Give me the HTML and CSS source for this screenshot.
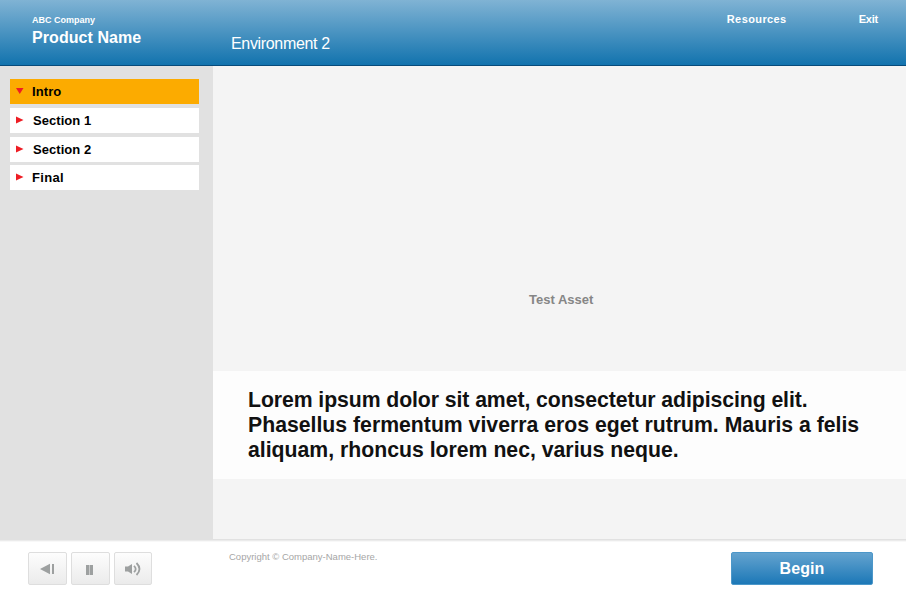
FILE: index.html
```html
<!DOCTYPE html>
<html lang="en">
<head>
<meta charset="utf-8">
<title>Product Name</title>
<link rel="stylesheet" href="styles.css">
</head>
<body>
<header class="header">
  <div class="brand">
    <div class="company"><span>ABC Company</span></div>
    <div class="product"><span>Product Name</span></div>
  </div>
  <h1 class="title"><span>Environment 2</span></h1>
  <nav class="links"><a class="resources">Resources</a><a class="exit">Exit</a></nav>
</header>
<main class="body">
  <nav class="sidebar">
    <a class="item active"><svg class="arrow" viewBox="0 0 8 8"><path d="M0 1h7.500L3.750 7z"/></svg><span class="intro">Intro</span></a>
    <a class="item"><svg class="arrow" viewBox="0 0 8 8"><path d="M0 .5v7L7.5 4z"/></svg><span class="section">Section 1</span></a>
    <a class="item"><svg class="arrow" viewBox="0 0 8 8"><path d="M0 .5v7L7.5 4z"/></svg><span class="section">Section 2</span></a>
    <a class="item last"><svg class="arrow" viewBox="0 0 8 8"><path d="M0 .5v7L7.5 4z"/></svg><span class="final">Final</span></a>
  </nav>
  <section class="stage">
    <div class="asset"><span>Test Asset</span></div>
    <div class="caption"><p><span class="line-first">Lorem ipsum dolor sit amet, consectetur adipiscing elit.</span><br>Phasellus fermentum viverra eros eget rutrum. Mauris a felis<br>aliquam, rhoncus lorem nec, varius neque.</p></div>
  </section>
</main>
<footer class="footer">
  <div class="controls">
    <button class="control" aria-label="Back"><svg width="15" height="12" viewBox="0 0 15 12"><path d="M0 6 10 .8v10.4zM12 1h2v10h-2z" fill="#9da0a0"/></svg></button>
    <button class="control" aria-label="Pause"><svg width="15" height="12" viewBox="0 0 15 12"><path d="M3 2h3v10H3zM7 2h3v10H7z" fill="#9da0a0"/><path d="M6 2h1v10H6z" fill="#c9caca"/></svg></button>
    <button class="control volume" aria-label="Volume"><svg width="16" height="14" viewBox="0 0 16 14"><path d="M0 4.500h3L7 2v10L3 9.500H0z" fill="#9da0a0"/><path d="M9 3.800q3.400 3.200 0 6.400M11.500 1q6 6 0 12" fill="none" stroke="#9da0a0" stroke-width="1.800"/></svg></button>
  </div>
  <p class="copyright">Copyright © Company-Name-Here.</p>
  <button class="begin"><span>Begin</span></button>
</footer>
</body>
</html>
```
FILE: styles.css
```css
* { box-sizing: border-box; }
body {
  margin: 0;
  width: 906px;
  height: 597px;
  overflow: hidden;
  display: flex;
  flex-direction: column;
  background: #fff;
  font-family: "Liberation Sans", Arial, sans-serif;
}
h1, p { margin: 0; }
button { font: inherit; padding: 0; }
svg { display: block; }

.header {
  height: 66px;
  display: flex;
  color: #fff;
  background: linear-gradient(#80b3d4, #1273ae);
  border-bottom: 1px solid #074b7b;
}
.brand { width: 231px; padding: 14px 0 0 32px; font-weight: bold; }
.company { font-size: 9px; line-height: 13px; }
.product { font-size: 16px; line-height: 21px; letter-spacing: .07px; }
.title { flex: 1; padding-top: 34px; font-size: 16px; font-weight: normal; line-height: 20px; letter-spacing: -.33px; }
.links { display: flex; padding: 12px 28px 0 0; font-size: 11px; font-weight: bold; line-height: 14px; }
.resources { letter-spacing: .4px; }
.exit { margin-left: 72px; letter-spacing: -.2px; }

.body { height: 473px; display: flex; }
.sidebar { width: 213px; padding: 13px 14px 0 10px; background: #e1e1e1; }
.item {
  height: 25px;
  margin-bottom: 4px;
  padding-left: 6px;
  display: flex;
  align-items: center;
  background: #fff;
  color: #000;
  font-size: 13px;
  font-weight: bold;
}
.item.active { background: #fcab00; }
.item.last { margin-top: -1px; }
.arrow { width: 8px; height: 8px; margin: 0 8px 1px 0; fill: #ee1d24; }
.intro { letter-spacing: .1px; }
.section { padding-left: 1px; letter-spacing: .05px; }
.final { letter-spacing: .35px; }

.stage { flex: 1; background: #f4f4f4; }
.asset {
  height: 305px;
  padding: 226px 0 0 316px;
  color: #868686;
  font-size: 13px;
  font-weight: bold;
  line-height: 15px;
}
.caption { height: 108px; padding: 16px 0 0 35px; background: #fdfdfd; color: #111; }
.caption p {
  font-size: 22px;
  line-height: 25px;
  font-weight: bold;
  white-space: nowrap;
  transform: scaleX(.965);
  transform-origin: left;
}
.line-first { letter-spacing: -.08px; }

.footer {
  height: 58px;
  padding: 13px 33px 0 28px;
  display: flex;
  align-items: flex-start;
  background: linear-gradient(#e1e1e1 0 1px, #ebebeb 1px 2px, #f8f8f8 2px 3px, #fff 3px);
}
.controls { width: 201px; display: flex; gap: 4px; }
.control {
  width: 39px;
  height: 33px;
  display: flex;
  align-items: center;
  justify-content: center;
  border: 1px solid #dedede;
  border-radius: 2px;
  background: linear-gradient(#fdfdfd, #ebebeb);
}
.volume { width: 38px; }
.copyright { flex: 1; margin-top: -2px; color: #a6a6a6; font-size: 9.5px; line-height: 14px; }
.begin {
  width: 142px;
  height: 33px;
  border: 1px solid #4c97c9;
  border-radius: 2px;
  background: linear-gradient(#64a3cf, #1c78b7);
  color: #fff;
  font-size: 16px;
  font-weight: bold;
  letter-spacing: .1px;
}
```
